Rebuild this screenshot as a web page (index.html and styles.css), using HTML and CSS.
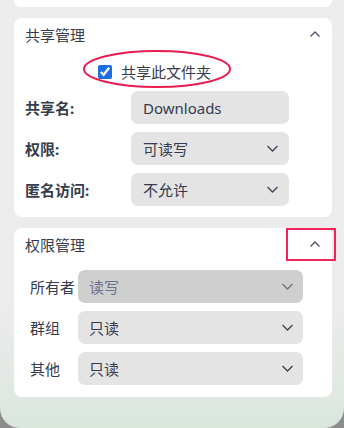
FILE: index.html
```html
<!DOCTYPE html>
<html>
    <head>
        <meta charset="utf-8">
        <title>文件夹属性</title>
        <link rel="stylesheet" href="styles.css">
    </head>
    <body>
        <div class="window">
            <!-- 上一个面板 -->
            <div class="card card-top"></div>

            <!-- 共享管理 -->
            <div class="card">
                <div class="card-head">
                    <span class="card-title">共享管理</span>
                    <svg class="arrow-up" width="10" height="6" viewBox="0 0 10 6"><path d="M0.5 5.5 L5 1 L9.5 5.5" fill="none" stroke="#4a5163" stroke-width="1.3"/></svg>
                </div>
                <div class="share-check">
                    <input type="checkbox" class="check" checked>
                    <span>共享此文件夹</span>
                </div>
                <svg class="mark-ellipse" width="150" height="40" viewBox="0 0 150 40"><ellipse cx="75" cy="20" rx="73" ry="18" fill="none" stroke="#ea1c4e" stroke-width="2"/></svg>
                <div class="form-row">
                    <span class="label-bold">共享名:</span>
                    <div class="field field-wide">Downloads</div>
                </div>
                <div class="form-row">
                    <span class="label-bold">权限:</span>
                    <div class="field field-wide">
                        <span>可读写</span>
                        <svg class="arrow-down" width="11" height="7" viewBox="0 0 11 7"><path d="M0.5 1 L5.5 6 L10.5 1" fill="none" stroke="#3b4255" stroke-width="1.3"/></svg>
                    </div>
                </div>
                <div class="form-row">
                    <span class="label-bold">匿名访问:</span>
                    <div class="field field-wide">
                        <span>不允许</span>
                        <svg class="arrow-down" width="11" height="7" viewBox="0 0 11 7"><path d="M0.5 1 L5.5 6 L10.5 1" fill="none" stroke="#3b4255" stroke-width="1.3"/></svg>
                    </div>
                </div>
            </div>

            <!-- 权限管理 -->
            <div class="card card-perm">
                <div class="card-head">
                    <span class="card-title">权限管理</span>
                    <svg class="arrow-up" width="10" height="6" viewBox="0 0 10 6"><path d="M0.5 5.5 L5 1 L9.5 5.5" fill="none" stroke="#4a5163" stroke-width="1.3"/></svg>
                </div>
                <div class="mark-box"></div>
                <div class="perm-row">
                    <span class="label">所有者</span>
                    <div class="field field-full field-disabled">
                        <span>读写</span>
                        <svg class="arrow-down" width="11" height="7" viewBox="0 0 11 7"><path d="M0.5 1 L5.5 6 L10.5 1" fill="none" stroke="#6d7488" stroke-width="1.3"/></svg>
                    </div>
                </div>
                <div class="perm-row">
                    <span class="label">群组</span>
                    <div class="field field-full">
                        <span>只读</span>
                        <svg class="arrow-down" width="11" height="7" viewBox="0 0 11 7"><path d="M0.5 1 L5.5 6 L10.5 1" fill="none" stroke="#3b4255" stroke-width="1.3"/></svg>
                    </div>
                </div>
                <div class="perm-row">
                    <span class="label">其他</span>
                    <div class="field field-full">
                        <span>只读</span>
                        <svg class="arrow-down" width="11" height="7" viewBox="0 0 11 7"><path d="M0.5 1 L5.5 6 L10.5 1" fill="none" stroke="#3b4255" stroke-width="1.3"/></svg>
                    </div>
                </div>
            </div>
        </div>
    </body>
</html>
```
FILE: styles.css
```css
html {
    background: #8c8c8c;
}
body {
    margin: 0;
    width: 344px;
    height: 428px;
    overflow: hidden;
    font-family: "Noto Sans", "Noto Sans CJK SC", sans-serif;
    font-size: 15px;
    color: #363c4c;
}
.window {
    height: 428px;
    box-sizing: border-box;
    padding: 0 12px 0 14px;
    display: flex;
    flex-direction: column;
    gap: 11px;
    border-radius: 0 0 20px 20px;
    background: linear-gradient(180deg, #ededed 0%, #ececec 70%, #e3e9e4 88%, #d9e6dc 100%);
}
.card {
    position: relative;
    background: #ffffff;
    border-radius: 8px;
    padding: 0 11px 11px 11px;
    display: flex;
    flex-direction: column;
    gap: 8px;
}
.card-top {
    height: 7px;
    padding: 0;
    border-radius: 0 0 8px 8px;
}
.card-perm {
    padding-bottom: 12px;
}
.card-perm .perm-row:nth-of-type(2) {
    margin-top: 1px;
}
.card-head {
    height: 34px;
    display: flex;
    align-items: center;
    justify-content: space-between;
}
.card-title {
    line-height: 34px;
}
.arrow-up {
    margin-right: 1px;
    margin-top: -2px;
}
.share-check {
    height: 39px;
    display: flex;
    align-items: center;
    gap: 9px;
    padding-left: 73px;
    margin: -8px 0;
}
.check {
    width: 14px;
    height: 14px;
    margin: 0;
    accent-color: #1b6fe0;
}
.mark-ellipse {
    position: absolute;
    left: 68px;
    top: 31px;
}
.mark-box {
    position: absolute;
    left: 272px;
    top: 0;
    width: 46px;
    height: 29px;
    border: 2.5px solid #f0245a;
}
.form-row {
    display: flex;
    align-items: center;
    height: 33px;
}
.label-bold {
    width: 106px;
    font-weight: bold;
}
.field {
    height: 33px;
    box-sizing: border-box;
    border-radius: 7px;
    background: #e4e4e4;
    display: flex;
    align-items: center;
    justify-content: space-between;
    padding: 0 11px 0 12px;
    color: #343b4f;
}
.field-wide {
    width: 158px;
}
.field-full {
    width: 225px;
    padding-left: 11px;
    padding-right: 10px;
}
.field-disabled {
    background: #cfcfcf;
    color: #6a7190;
}
.perm-row {
    display: flex;
    align-items: center;
    height: 33px;
    padding-left: 5px;
}
.label {
    width: 48px;
}
```
